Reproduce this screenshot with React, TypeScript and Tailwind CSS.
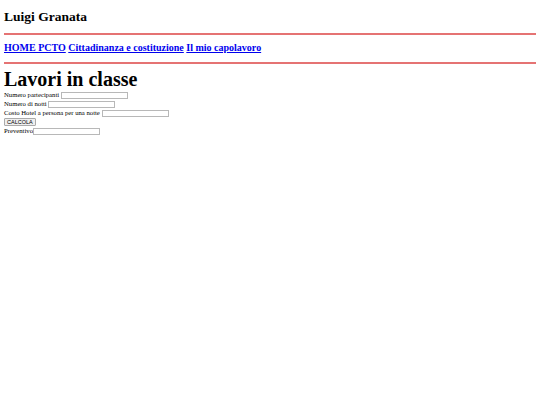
export default function App() {
  const serif = { fontFamily: '"Liberation Serif", "Times New Roman", serif' }
  const field = "inline-block h-[7px] w-[67px] border border-[#b8b8b8] align-middle"
  return (
    <div className="min-h-[405px] bg-white p-1 text-black" style={serif}>
      <h2 className="mt-[5px] text-[13.5px] font-bold leading-[16px]">Luigi Granata</h2>
      <hr className="mt-[8px] border-0 border-t-2 border-[#e57373]" />
      <nav className="mt-[7px] text-[10px] font-bold leading-[12px]">
        <a href="#" className="text-[#0000ee] underline">HOME PCTO</a>{" "}
        <a href="#" className="text-[#0000ee] underline">Cittadinanza e costituzione</a>{" "}
        <a href="#" className="text-[#0000ee] underline">Il mio capolavoro</a>
      </nav>
      <hr className="mt-[8px] border-0 border-t-2 border-[#e57373]" />
      <h1 className="mt-[4px] text-[20px] font-bold leading-[22px]">Lavori in classe</h1>
      <form className="text-[6.7px] leading-[9px]">
        <div className="h-[9px]">
          Numero partecipanti <input className={field} />
        </div>
        <div className="h-[9px]">
          Numero di notti <input className={field} />
        </div>
        <div className="h-[9px]">
          Costo Hotel a persona per una notte <input className={field} />
        </div>
        <div className="flex h-[9px] items-center">
          <button
            type="button"
            className="h-[8px] rounded-[1px] border border-[#aaa] bg-[#efefef] px-[2px] text-[5.5px] leading-[6px]"
            style={{ fontFamily: '"Liberation Sans", Arial, sans-serif' }}
          >
            CALCOLA
          </button>
        </div>
        <div className="h-[9px]">
          Preventivo<input className={field} />
        </div>
      </form>
    </div>
  )
}
